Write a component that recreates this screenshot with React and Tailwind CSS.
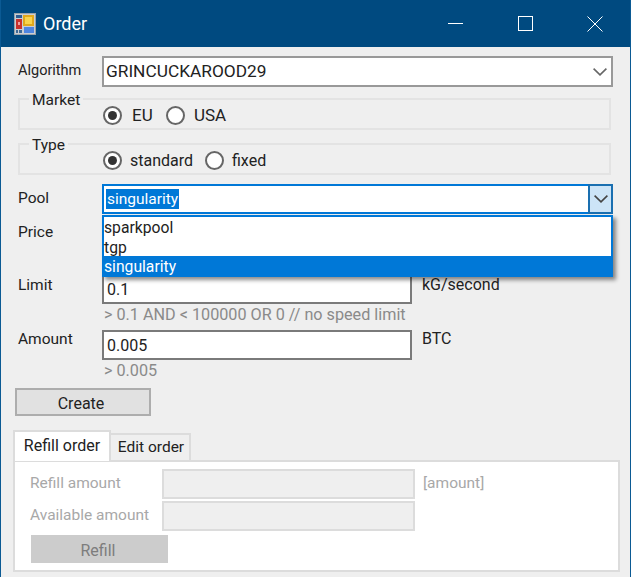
const FONT = "font-['Roboto','Open_Sans',sans-serif]";

const AppIcon = () => (
  <svg width="22" height="22" viewBox="0 0 22 22" className="shrink-0">
    <rect x="0.5" y="0.5" width="21" height="21" fill="#c9ced3" stroke="#9aa3aa" />
    <rect x="2" y="2" width="6" height="3" fill="#2f5d92" />
    <rect x="2" y="6" width="6" height="10" fill="#c9302c" />
    <rect x="4" y="9" width="2" height="3" fill="#f0a0a0" />
    <rect x="9" y="2" width="11" height="11" fill="#e0a81c" />
    <rect x="11" y="4" width="7" height="7" fill="#f8d44c" />
    <rect x="10" y="14" width="10" height="6" fill="#4f86e0" />
    <rect x="2" y="17" width="2" height="3" fill="#3f6a96" />
    <rect x="5" y="17" width="3" height="3" fill="#3f6a96" />
  </svg>
);

const Chevron = ({ color }) => (
  <svg width="14" height="8" viewBox="0 0 14 8" fill="none" stroke={color} strokeWidth="1.6" className="shrink-0">
    <path d="M0.6 0.6L7 6.8L13.4 0.6" />
  </svg>
);

const TitleBar = () => (
  <div className="h-[47px] bg-[#004a80] flex items-center pl-[13px] shrink-0">
    <AppIcon />
    <span className="ml-[7px] text-white text-[18px]">Order</span>
    <div className="ml-auto flex items-center h-full">
      <div className="w-[70px] flex justify-center"><div className="w-[15px] h-px bg-white" /></div>
      <div className="w-[70px] flex justify-center"><div className="w-[15px] h-[15px] border border-white" /></div>
      <div className="w-[70px] flex justify-center">
        <svg width="16" height="16" viewBox="0 0 16 16" stroke="white" strokeWidth="1">
          <path d="M0.5 0.5L15.5 15.5M15.5 0.5L0.5 15.5" />
        </svg>
      </div>
    </div>
  </div>
);

const Radio = ({ label, checked, className, textClass }) => (
  <div className={`flex items-center ${className}`}>
    <div className="w-[19px] h-[19px] rounded-full border-2 border-[#666] bg-white flex items-center justify-center shrink-0">
      {checked && <div className="w-[9px] h-[9px] rounded-full bg-[#333]" />}
    </div>
    <span className={`pt-px text-[#222] ${textClass}`}>{label}</span>
  </div>
);

const Group = ({ title, className, children }) => (
  <div className={`relative ml-[17px] mr-[19px] h-[32px] border-2 border-[#e3e3e3] flex items-center pl-[83px] pt-[3px] ${className}`}>
    <span className="absolute left-[9px] top-[-11px] bg-[#efefef] px-[3px] text-[15.5px] leading-[22px] text-[#222]">{title}</span>
    {children}
  </div>
);

const Field = ({ label, value, unit, hint, className, textClass }) => (
  <div className={`flex items-start pl-[16px] ${className}`}>
    <span className={`w-[85px] pl-px text-[15.5px] leading-[22px] text-[#222] ${textClass}`}>{label}</span>
    <div className="w-[310px]">
      <div className="h-[30px] bg-white border-2 border-[#7a7a7a] px-[3px] text-[16px] leading-[28px] text-[#222]">{value}</div>
      <div className="h-[23px] pl-[2px] text-[16.2px] leading-[22px] text-[#8a8a8a] whitespace-nowrap">{hint}</div>
    </div>
    <span className={`ml-[10px] text-[16px] leading-[22px] text-[#222] ${textClass}`}>{unit}</span>
  </div>
);

const Dropdown = () => (
  <div className="absolute left-[101px] top-[31px] w-[511px] h-[62px] z-10 bg-white border-2 border-[#0078d7] border-b-0 shadow-[3px_3px_4px_rgba(0,0,0,0.45)] text-[15.7px] leading-[20px] text-[#222]">
    <div className="pt-px">sparkpool</div>
    <div>tgp</div>
    <div className="pl-[2px] pt-px -mx-[2px] -mt-[2px] h-[21px] bg-[#0078d7] text-white">singularity</div>
  </div>
);

export default function App() {
  return (
    <div className={`${FONT} w-[631px] h-[577px] bg-[#efefef] border-x border-[#0b5a94] overflow-hidden flex flex-col`}>
      <TitleBar />

      <div className="flex items-start pl-[16px] mt-[9px]">
        <span className="w-[85px] pl-px text-[14.5px] leading-[22px] text-[#222] pt-[4px]">Algorithm</span>
        <div className="w-[511px] h-[31px] bg-white border-2 border-[#999] flex items-center pl-[2px] pr-[4px] text-[17.3px] text-[#222]">
          GRINCUCKAROOD29
          <div className="ml-auto"><Chevron color="#666" /></div>
        </div>
      </div>

      <Group title="Market" className="mt-[11px]">
        <Radio label="EU" checked className="w-[63px]" textClass="ml-[10px] text-[17px]" />
        <Radio label="USA" className="w-[70px]" textClass="ml-[9px] text-[17px]" />
      </Group>
      <Group title="Type" className="mt-[13px]">
        <Radio label="standard" checked className="w-[102px]" textClass="ml-[8px] text-[16px]" />
        <Radio label="fixed" className="w-[70px]" textClass="ml-[8px] text-[16px]" />
      </Group>

      <div className="relative flex items-start pl-[16px] mt-[9px] h-[90px] shrink-0">
        <span className="w-[85px] pl-px text-[15.5px] leading-[22px] text-[#222] pt-[3px]">Pool</span>
        <div className="w-[511px] h-[30px] bg-white border-2 border-[#0078d7] flex items-center pl-[2px] text-[15.5px] text-[#222]">
          <span className="bg-[#0078d7] text-white leading-[20px] px-px">singularity</span>
          <div className="ml-auto -mr-[2px] w-[25px] h-[30px] bg-[#cce4f7] border-2 border-[#1a6fb0] flex items-center justify-center">
            <Chevron color="#444" />
          </div>
        </div>
        <span className="absolute left-[17px] top-[37px] text-[15.5px] leading-[22px] text-[#222]">Price</span>
        <Dropdown />
      </div>

      <Field label="Limit" value="0.1" unit="kG/second" hint="> 0.1 AND < 100000 OR 0 // no speed limit" textClass="mt-0" />
      <Field label="Amount" value="0.005" unit="BTC" hint="> 0.005" className="mt-[3px]" textClass="-mt-[2px]" />

      <div className="ml-[14px] mt-[5px] w-[136px] h-[28px] bg-[#e1e1e1] border-2 border-[#adadad] flex items-center justify-center pr-[4px] pt-[3px] text-[16px] text-[#222] shrink-0">Create</div>

      <div className="ml-[12px] mt-[14px] flex items-end h-[30px] relative z-[1] shrink-0">
        <div className="h-[31px] w-[98px] bg-white border-2 border-b-0 border-[#dcdcdc] flex items-center justify-center pb-px text-[16px] text-[#222] -mb-px">Refill order</div>
        <div className="h-[27px] w-[80px] bg-[#efefef] border-2 border-b-0 border-l-0 border-[#dcdcdc] flex items-center justify-center pl-[2px] text-[15.5px] text-[#222]">Edit order</div>
      </div>
      <div className="ml-[12px] w-[607px] h-[112px] bg-white border-2 border-[#dcdcdc] pl-[16px] pt-[7px] shrink-0">
        <div className="flex items-center h-[30px]">
          <span className="w-[132px] -ml-px text-[15.5px] text-[#a8a8a8]">Refill amount</span>
          <div className="w-[253px] h-[30px] bg-[#efefef] border-2 border-[#dcdcdc]" />
          <span className="ml-[8px] text-[15.5px] text-[#a8a8a8]">[amount]</span>
        </div>
        <div className="flex items-center h-[30px] mt-[2px]">
          <span className="w-[132px] -ml-px text-[15.5px] text-[#a8a8a8]">Available amount</span>
          <div className="w-[253px] h-[30px] bg-[#efefef] border-2 border-[#dcdcdc]" />
        </div>
        <div className="mt-[4px] w-[137px] h-[28px] bg-[#cccccc] flex items-center justify-center pr-[3px] pt-[3px] text-[16px] text-[#7d7d7d]">Refill</div>
      </div>
    </div>
  );
}
